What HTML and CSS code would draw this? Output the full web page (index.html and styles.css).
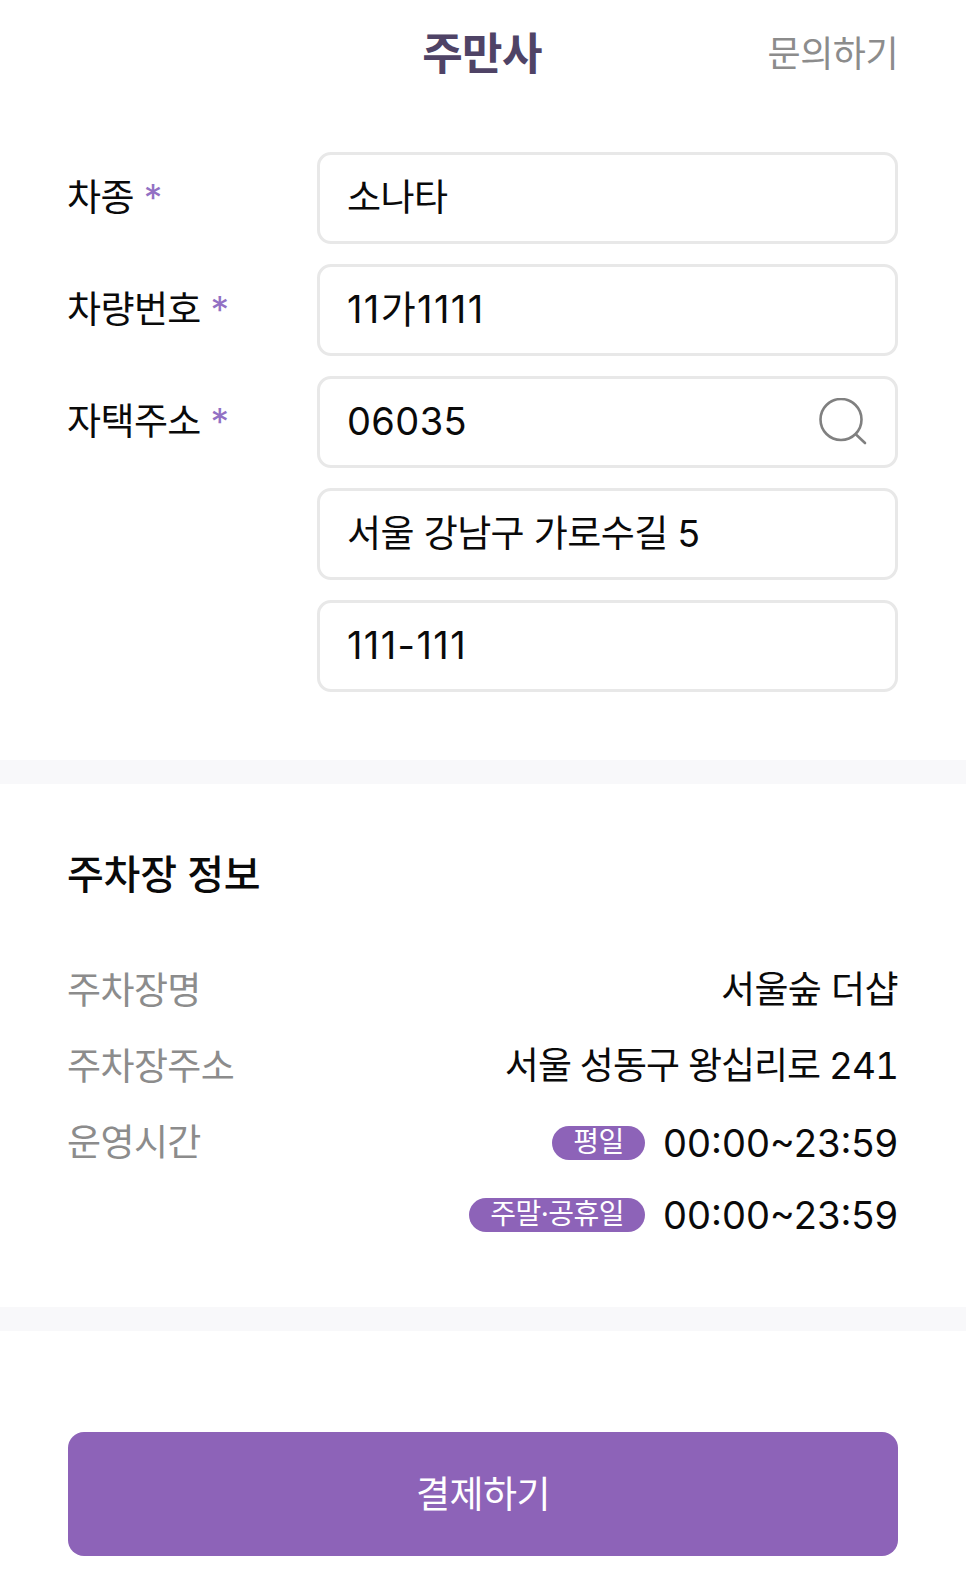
FILE: index.html
```html
<!DOCTYPE html>
<html lang="ko">

<head>
  <meta charset="UTF-8">
  <meta name="viewport" content="width=device-width, initial-scale=1.0">
  <title>주만사</title>
  <link rel="stylesheet" href="styles.css">
</head>

<body>
  <header class="top-bar">
    <h1 class="top-title">주만사</h1>
    <a class="top-link" href="#">문의하기</a>
  </header>

  <form class="car-form">
    <div class="form-row">
      <label class="form-label" for="car-model">차종 <span class="required">*</span></label>
      <div class="form-fields">
        <input class="text-input" type="text" id="car-model" value="소나타">
      </div>
    </div>
    <div class="form-row">
      <label class="form-label" for="car-number">차량번호 <span class="required">*</span></label>
      <div class="form-fields">
        <input class="text-input ones-input mixed-input" type="text" id="car-number" value="11가1111">
      </div>
    </div>
    <div class="form-row">
      <label class="form-label" for="zip-code">자택주소 <span class="required">*</span></label>
      <div class="form-fields">
        <div class="search-field">
          <input class="text-input num-input" type="text" id="zip-code" value="06035">
          <svg class="search-icon" viewBox="0 0 48 48" fill="none" stroke="#808080" stroke-width="2.6" stroke-linecap="round">
            <circle cx="22" cy="21.5" r="20.5"/>
            <path d="M37 36.5 46 45"/>
          </svg>
        </div>
        <input class="text-input" type="text" value="서울 강남구 가로수길 5">
        <input class="text-input ones-input" type="text" value="111-111">
      </div>
    </div>
  </form>

  <div class="divider"></div>

  <section class="parking-info">
    <h2 class="section-title">주차장 정보</h2>
    <dl class="info-list">
      <div class="info-row">
        <dt>주차장명</dt>
        <dd>서울숲 더샵</dd>
      </div>
      <div class="info-row">
        <dt>주차장주소</dt>
        <dd class="address-value">서울 성동구 왕십리로 241</dd>
      </div>
      <div class="info-row">
        <dt>운영시간</dt>
        <dd class="hours">
          <span class="hours-line"><span class="day-badge">평일</span>00:00~23:59</span>
          <span class="hours-line"><span class="day-badge">주말·공휴일</span>00:00~23:59</span>
        </dd>
      </div>
    </dl>
  </section>

  <div class="divider"></div>

  <div class="pay-area">
    <button class="pay-btn" type="button">결제하기</button>
  </div>
</body>

</html>
```

FILE: styles.css
```css
* {
  box-sizing: border-box;
}

body {
  margin: 0;
  background-color: #fff;
  color: #0a0a0a;
  font-family: Inter, "Noto Sans CJK KR", sans-serif;
  font-size: 37px;
  letter-spacing: -0.6px;
}

.top-bar {
  position: relative;
  height: 108px;
  padding: 0 2px 6px 0;
  display: flex;
  align-items: center;
  justify-content: center;
}

.top-title {
  margin: 0;
  font-size: 44px;
  font-weight: 700;
  color: #4f4366;
}

.top-link {
  position: absolute;
  right: 68px;
  top: 25px;
  color: #8c8c8c;
  font-size: 36px;
  letter-spacing: -0.5px;
  text-decoration: none;
}

.car-form {
  padding: 44px 68px 68px 67px;
  display: flex;
  flex-direction: column;
  gap: 20px;
}

.form-row {
  display: flex;
}

.form-label {
  width: 250px;
  flex-shrink: 0;
  padding-top: 20px;
  line-height: 52px;
}

.required {
  color: #9271c4;
}

.form-fields {
  flex: 1;
  display: flex;
  flex-direction: column;
  gap: 20px;
}

.text-input {
  display: block;
  width: 100%;
  height: 92px;
  padding: 0 27px 7px;
  border: 3px solid #e8e8e8;
  border-radius: 14px;
  background-color: #fff;
  color: #0a0a0a;
  font: inherit;
  letter-spacing: inherit;
}

.num-input {
  padding-bottom: 3px;
  font-size: 38px;
  letter-spacing: 0.4px;
}

.ones-input {
  padding-bottom: 3px;
  font-size: 38px;
  letter-spacing: 1.4px;
}

.mixed-input {
  padding-bottom: 7px;
}

.search-field {
  position: relative;
}

.search-icon {
  position: absolute;
  right: 30px;
  top: 22px;
  width: 50px;
  height: 48px;
}

.divider {
  height: 24px;
  background-color: #f8f8fa;
}

.parking-info {
  padding: 65px 68px 66px 67px;
}

.section-title {
  margin: 0 0 63px;
  font-size: 40px;
  font-weight: 500;
  line-height: 52px;
  letter-spacing: -0.2px;
}

.info-list {
  margin: 0;
  display: flex;
  flex-direction: column;
  gap: 24px;
}

.info-row {
  display: flex;
  justify-content: space-between;
  line-height: 52px;
}

.info-row dt {
  margin: 1px 0 -1px;
  color: #8c8c8c;
}

.info-row dd {
  margin: 0;
  text-align: right;
}

.info-row .address-value {
  font-variant-numeric: tabular-nums;
  letter-spacing: -1px;
}

.hours {
  padding-top: 1px;
  display: flex;
  flex-direction: column;
  align-items: flex-end;
  gap: 20px;
}

.hours-line {
  display: flex;
  align-items: center;
  gap: 18px;
  font-size: 38px;
  letter-spacing: 0;
}

.day-badge {
  min-width: 93px;
  height: 34px;
  padding: 0 21px;
  border-radius: 17px;
  background-color: #8d63b8;
  color: #fff;
  font-size: 28px;
  line-height: 32px;
  letter-spacing: -0.5px;
  text-align: center;
}

.pay-area {
  padding: 101px 68px 15px;
}

.pay-btn {
  display: block;
  width: 100%;
  height: 124px;
  padding: 0 0 4px;
  border: none;
  border-radius: 16px;
  background-color: #8d63b8;
  color: #fff;
  font: inherit;
  letter-spacing: inherit;
  cursor: pointer;
}
```
